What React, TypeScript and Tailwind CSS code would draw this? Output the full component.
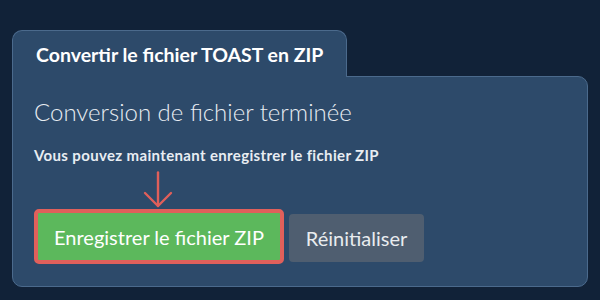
export default function App() {
  return (
    <div className="w-[600px] h-[300px] bg-[#112238] pt-[30px] px-[12px] font-['Lato',sans-serif]">
      {/* Tab */}
      <div className="relative z-10 w-[335px] h-[47px] -mb-px rounded-t-[10px] border border-b-0 border-[#4b6a8c] bg-[#2d4a6a] pl-[23px] pt-[13px]">
        <h1 className="text-[19.5px] font-bold leading-[22px] text-white">Convertir le fichier TOAST en ZIP</h1>
      </div>
      {/* Panel */}
      <div className="w-[576px] h-[211px] rounded-b-[10px] rounded-tr-[10px] border border-[#4b6a8c] bg-[#2d4a6a] pl-[21px] pt-[21px]">
        <h2 className="text-[24px] font-light leading-[28px] text-[#e8edf2]">Conversion de fichier terminée</h2>
        <p className="mt-[20px] text-[15px] font-bold leading-[18px] tracking-[0.35px] text-[#e8edf2]">Vous pouvez maintenant enregistrer le fichier ZIP</p>
        <div className="mt-[45px] flex items-end gap-[5px]">
          <div className="relative">
            <svg
              className="absolute -top-[38px] left-[109px]"
              width="30"
              height="37"
              viewBox="0 0 30 37"
              fill="none"
              stroke="#df5f5a"
              strokeWidth="2.4"
              strokeLinecap="round"
              strokeLinejoin="round"
            >
              <path d="M15 1.5V35" />
              <path d="M2 22L15 35L28 22" />
            </svg>
            <button className="h-[55px] w-[250px] rounded-[5px] border-[4px] border-[#e0605b] bg-[#5cb85c] text-[20px] text-white">
              Enregistrer le fichier ZIP
            </button>
          </div>
          <button className="mb-[2px] h-[48px] w-[135px] rounded-[4px] bg-[#4f5e70] text-[20px] text-[#e9ecef]">
            Réinitialiser
          </button>
        </div>
      </div>
    </div>
  );
}
